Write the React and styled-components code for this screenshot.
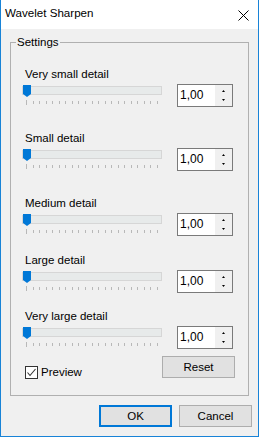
import React from 'react';
import styled, { createGlobalStyle } from 'styled-components';

const Global = createGlobalStyle`
  html, body { margin: 0; padding: 0; background: #f0f0f0; }
  body {
    font-family: "Liberation Sans", Arial, sans-serif;
    font-size: 11.5px;
    color: #000;
  }
`;

const Window = styled.div`
  width: 259px;
  height: 437px;
  box-sizing: border-box;
  border: 1px solid #1883d7;
  border-top: none;
  background: #f0f0f0;
  display: flex;
  flex-direction: column;
`;

const TitleBar = styled.div`
  height: 29px;
  box-sizing: border-box;
  background: #fff;
  display: flex;
  align-items: flex-start;
  padding: 6px 9px 0 4px;
`;

const Title = styled.span`
  flex: 1;
  font-size: 11.6px;
  line-height: 14px;
`;

const CloseIcon = styled.svg`
  margin-top: 4px;
  display: block;
`;

const Group = styled.fieldset`
  margin: 6px 0 0 9px;
  padding: 0;
  width: 239px;
  box-sizing: border-box;
  border: 1px solid #b0b0b0;
  min-width: 0;
`;

const Legend = styled.legend`
  padding: 0 1px;
  margin-left: 5px;
  line-height: 14px;
  font-size: 11.5px;
`;

const Content = styled.div`
  padding: 18px 15px 16px 11px;
  display: flex;
  flex-direction: column;
`;

const Row = styled.div`
  display: flex;
  flex-direction: column;
  margin-top: ${(p) => p.$gap}px;
`;

const Label = styled.div`
  line-height: 14px;
  margin-left: 3px;
  margin-bottom: 4px;
`;

const Controls = styled.div`
  display: flex;
  align-items: flex-start;
  justify-content: space-between;
`;

const TrackArea = styled.div`
  position: relative;
  width: 140px;
  height: 22px;
`;

const TrackBar = styled.div`
  margin-top: 1px;
  height: 9px;
  box-sizing: border-box;
  background: #e7eaea;
  border: 1px solid #d6d6d6;
`;

const Thumb = styled.svg`
  position: absolute;
  left: 1px;
  top: 0;
  display: block;
`;

const Ticks = styled.svg`
  display: block;
  margin-top: 5px;
`;

const Spin = styled.div`
  margin-top: -1px;
  width: 56px;
  height: 23px;
  box-sizing: border-box;
  border: 1px solid #7a7a7a;
  background: #fff;
  display: flex;
  align-items: stretch;
`;

const SpinValue = styled.span`
  flex: 1;
  padding-left: 2px;
  line-height: 20px;
  font-size: 12px;
`;

const SpinButtons = styled.div`
  width: 17px;
  background: #f0f0f0;
  display: flex;
  flex-direction: column;
  align-items: center;
  justify-content: center;
  gap: 7px;
`;

const Footer = styled.div`
  display: flex;
  align-items: flex-start;
  justify-content: space-between;
  margin-top: 7px;
`;

const CheckLabel = styled.label`
  display: flex;
  align-items: center;
  gap: 3px;
  margin-left: 3px;
  margin-top: 9px;
  line-height: 14px;
`;

const CheckBox = styled.span`
  width: 13px;
  height: 13px;
  box-sizing: border-box;
  border: 1px solid #333;
  background: #fff;
  display: flex;
  align-items: center;
  justify-content: center;
`;

const Button = styled.button`
  width: 73px;
  height: 22px;
  box-sizing: border-box;
  background: #e1e1e1;
  border: ${(p) => (p.$default ? '2px solid #0078d7' : '1px solid #adadad')};
  font-family: "Liberation Sans", Arial, sans-serif;
  font-size: 11.5px;
  color: #000;
  padding: 0;
  margin: 0;
  display: flex;
  align-items: center;
  justify-content: center;
`;

const ResetButton = styled(Button)`
  margin-right: -2px;
`;

const ButtonBar = styled.div`
  display: flex;
  justify-content: flex-end;
  gap: 7px;
  margin-top: 9px;
  padding-right: 6px;
`;

const TICKS = Array.from({ length: 21 }, (_, i) => Math.round(4 + i * 6.55) + 0.5);

function Slider() {
  return (
    <TrackArea>
      <TrackBar />
      <Thumb width="8" height="12" viewBox="0 0 8 12">
        <polygon points="0,0 8,0 8,9 4,12 0,9" fill="#0078d7" />
      </Thumb>
      <Ticks width="140" height="6" viewBox="0 0 140 6">
        {TICKS.map((x, i) => (
          <line key={i} x1={x} x2={x} y1={i === 0 ? 0 : 1} y2={i === 0 ? 5 : 4} stroke="#b8b8b8" strokeWidth="1" />
        ))}
      </Ticks>
    </TrackArea>
  );
}

function SpinBox({ value }) {
  return (
    <Spin>
      <SpinValue>{value}</SpinValue>
      <SpinButtons>
        <svg width="3" height="2" viewBox="0 0 3 2"><polygon points="1.5,0 3,2 0,2" fill="#000" /></svg>
        <svg width="3" height="2" viewBox="0 0 3 2"><polygon points="0,0 3,0 1.5,2" fill="#000" /></svg>
      </SpinButtons>
    </Spin>
  );
}

const ROWS = [
  { label: 'Very small detail', gap: 0 },
  { label: 'Small detail', gap: 24 },
  { label: 'Medium detail', gap: 25 },
  { label: 'Large detail', gap: 17 },
  { label: 'Very large detail', gap: 16 },
];

export default function App() {
  return (
    <>
      <Global />
      <Window>
        <TitleBar>
          <Title>Wavelet Sharpen</Title>
          <CloseIcon width="11" height="11" viewBox="0 0 11 11">
            <path d="M0.5 0.5 L10.5 10.5 M10.5 0.5 L0.5 10.5" stroke="#000" strokeWidth="1" fill="none" />
          </CloseIcon>
        </TitleBar>
        <Group>
          <Legend>Settings</Legend>
          <Content>
            {ROWS.map((r) => (
              <Row key={r.label} $gap={r.gap}>
                <Label>{r.label}</Label>
                <Controls>
                  <Slider />
                  <SpinBox value="1,00" />
                </Controls>
              </Row>
            ))}
            <Footer>
              <CheckLabel>
                <CheckBox>
                  <svg width="11" height="11" viewBox="0 0 11 11">
                    <path d="M1.5 5.5 L4 8.5 L9.5 2" stroke="#333" strokeWidth="1.1" fill="none" />
                  </svg>
                </CheckBox>
                Preview
              </CheckLabel>
              <ResetButton>Reset</ResetButton>
            </Footer>
          </Content>
        </Group>
        <ButtonBar>
          <Button $default>OK</Button>
          <Button>Cancel</Button>
        </ButtonBar>
      </Window>
    </>
  );
}
